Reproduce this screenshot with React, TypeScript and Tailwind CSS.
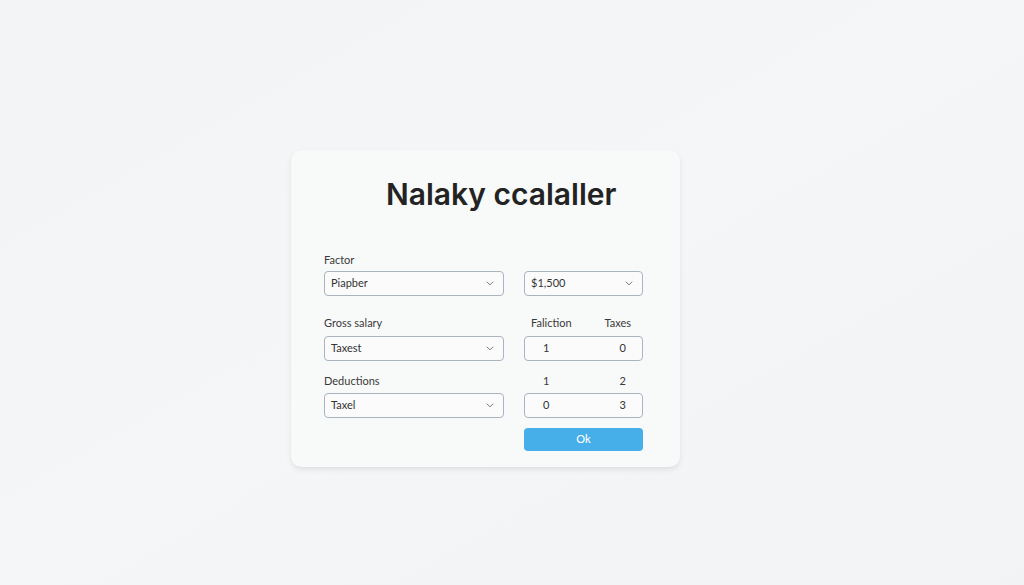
import React from 'react';

// Thin chevron used on the dropdown fields
const Chevron = () => (
  <svg width="8" height="5" viewBox="0 0 8 5" fill="none" className="text-[#7b818a]">
    <path d="M1 1 4 3.8 7 1" stroke="currentColor" strokeWidth="1" strokeLinecap="round" strokeLinejoin="round" />
  </svg>
);

const SelectBox: React.FC<{ value: string }> = ({ value }) => (
  <div className="flex h-[25px] items-center justify-between rounded-[4px] border border-[#aab4c1] bg-[#fbfbfc] pl-[6px] pr-[9px] text-[11px] text-[#333]">
    <span>{value}</span>
    <Chevron />
  </div>
);

const PairBox: React.FC<{ left: string; right: string }> = ({ left, right }) => (
  <div className="flex h-[25px] items-center justify-between rounded-[4px] border border-[#aab4c1] bg-[#fbfbfc] pl-[18px] pr-[16px] text-[11px] text-[#333]">
    <span>{left}</span>
    <span>{right}</span>
  </div>
);

const App: React.FC = () => {
  return (
    <div
      className="h-[585px] w-full overflow-hidden bg-gradient-to-br from-[#f2f4f5] via-[#f5f6f7] to-[#f1f3f4] pt-[150px]"
      style={{ fontFamily: 'Lato, "Open Sans", sans-serif' }}
    >
      <div className="ml-[291px] w-[389px] rounded-[10px] bg-[#f8f9f9] pb-[16px] pl-[33px] pr-[37px] pt-[26px] shadow-[0_3px_6px_-1px_rgba(0,0,0,0.1),0_0_1px_rgba(0,0,0,0.05)]">
        <h1
          className="pl-[62px] text-[30px] font-semibold leading-[36px] text-[#232323]"
          style={{ fontFamily: 'Inter, "Open Sans", sans-serif' }}
        >
          Nalaky ccalaller
        </h1>

        <div className="mt-[41px] grid grid-cols-[180px_119px] gap-x-[20px] text-[11px] text-[#3a3a3a]">
          {/* row 1 */}
          <div>
            <div className="leading-[14px]">Factor</div>
            <div className="mt-[4px]">
              <SelectBox value="Piapber" />
            </div>
          </div>
          <div className="pt-[18px]">
            <SelectBox value="$1,500" />
          </div>

          {/* row 2 */}
          <div className="mt-[20px]">
            <div className="leading-[14px]">Gross salary</div>
            <div className="mt-[6px]">
              <SelectBox value="Taxest" />
            </div>
          </div>
          <div className="mt-[20px]">
            <div className="flex justify-between pl-[7px] pr-[12px] leading-[14px]">
              <span>Faliction</span>
              <span>Taxes</span>
            </div>
            <div className="mt-[6px]">
              <PairBox left="1" right="0" />
            </div>
          </div>

          {/* row 3 */}
          <div className="mt-[13px]">
            <div className="leading-[14px]">Deductions</div>
            <div className="mt-[5px]">
              <SelectBox value="Taxel" />
            </div>
          </div>
          <div className="mt-[13px]">
            <div className="flex justify-between pl-[19px] pr-[17px] leading-[14px]">
              <span>1</span>
              <span>2</span>
            </div>
            <div className="mt-[5px]">
              <PairBox left="0" right="3" />
            </div>
          </div>

          {/* actions */}
          <div />
          <button className="mt-[10px] h-[23px] rounded-[4px] bg-[#46aee8] text-[11px] font-medium text-white">
            Ok
          </button>
        </div>
      </div>
    </div>
  );
};

export default App;
